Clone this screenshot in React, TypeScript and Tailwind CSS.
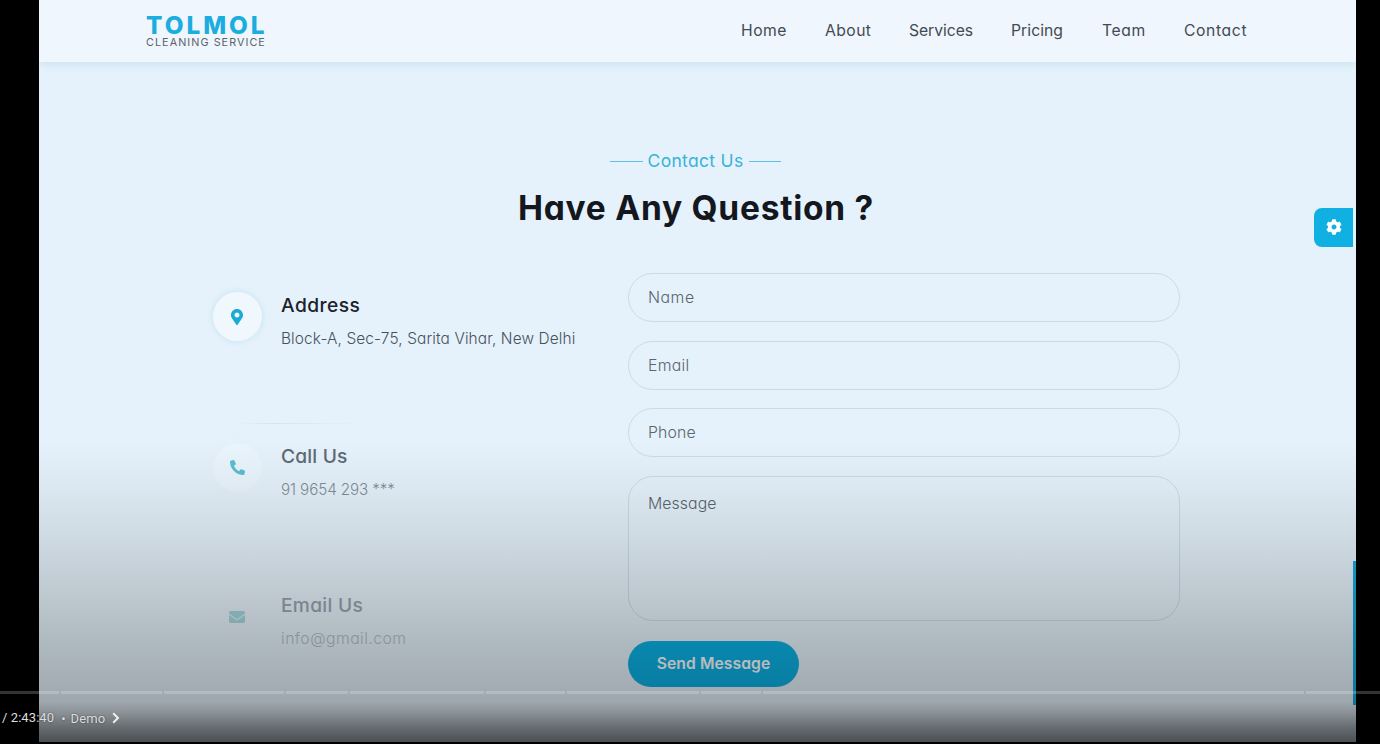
import type { ReactNode } from "react";
import { FaCog, FaEnvelope, FaMapMarkerAlt, FaPhoneAlt } from "react-icons/fa";

const navItems = [
  { label: "Home", box: "w-[84px] tracking-[0.5px]" },
  { label: "About", box: "w-[84px] tracking-[0.43px]" },
  { label: "Services", box: "w-[102px] tracking-[-0.05px]" },
  { label: "Pricing", box: "w-[91px] tracking-[0.06px]" },
  { label: "Team", box: "w-[82px] tracking-[0.6px]" },
  { label: "Contact", box: "w-[64px] tracking-[0.62px]" },
];

function Header() {
  return (
    <header className="flex h-[62px] shrink-0 items-start justify-between bg-[#eff6fd] pl-[107px] pr-[108px] shadow-[0_2px_8px_rgba(120,180,215,0.25)]">
      <div className="flex flex-col whitespace-nowrap pt-[14px]">
        <span className="h-[23px] text-[24.3px] font-extrabold leading-[23px] tracking-[3px] text-[#1badde]">TOLMOL</span>
        <span className="h-3 text-[10.8px] leading-3 tracking-[1.05px] text-[#5d626b]">CLEANING SERVICE</span>
      </div>
      <nav className="flex pt-[19px] text-[15.7px] leading-6 text-[#444a52]">
        {navItems.map((n) => (
          <a key={n.label} className={`whitespace-nowrap ${n.box}`}>{n.label}</a>
        ))}
      </nav>
    </header>
  );
}

function InfoRow({ icon, title, text, className, titleClass, textClass }: {
  icon: ReactNode; title: string; text: string; className: string; titleClass: string; textClass: string;
}) {
  return (
    <div className={`flex items-start ${className}`}>
      {icon}
      <div className="ml-[19px] whitespace-nowrap">
        <h3 className={`text-[19.2px] font-medium leading-[27px] ${titleClass}`}>{title}</h3>
        <p className={`mt-2 font-light leading-6 ${textClass}`}>{text}</p>
      </div>
    </div>
  );
}

const field =
  "block w-[552px] border border-[#c6dde7] bg-transparent px-[19px] text-[15.8px] font-light text-[#4e5963] outline-none placeholder:text-[#59656f] placeholder:opacity-100";

function ContactSection() {
  return (
    <main className="flex grow flex-col">
      <div className="flex flex-col items-center pr-[3px] pt-[87px]">
        <div className="flex items-center gap-[6px] whitespace-nowrap pr-px text-[17.5px] leading-6 tracking-[0.31px] text-[#39b2d9]">
          <span className="mt-px h-px w-[33px] bg-[#5fc0e1]" />
          <span className="-ml-px">Contact Us</span>
          <span className="mt-px h-px w-[32px] bg-[#5fc0e1]" />
        </div>
        <h2 className="mt-[15px] whitespace-nowrap text-[33.5px] font-bold leading-[40px] tracking-[0.75px] text-[#14181e]">
          Have Any Question ?
        </h2>
      </div>
      <div className="flex pl-[174px] pt-[45px]">
        <div className="w-[415px] pt-[19px]">
          <InfoRow
            className="h-[131px]"
            title="Address"
            text="Block-A, Sec-75, Sarita Vihar, New Delhi"
            titleClass="tracking-[0.45px] text-[#1b222b]"
            textClass="text-[15.4px] tracking-[0.13px] text-[#47515b]"
            icon={
              <div className="flex size-[49px] items-center justify-center rounded-full bg-[#f0f8fe] shadow-[0_0_6px_rgba(120,190,215,0.3)]">
                <FaMapMarkerAlt className="-ml-px size-4 text-[#19abd4]" />
              </div>
            }
          />
          <div className="ml-5 h-px w-[136px] bg-linear-to-r from-transparent via-[#d3e5ee] via-30% to-transparent" />
          <InfoRow
            className="h-[149px] pt-[19px]"
            title="Call Us"
            text="91 9654 293 ***"
            titleClass="tracking-[0.2px] text-[#5f6a74]"
            textClass="text-[15.2px] tracking-[-0.09px] text-[#818d97]"
            icon={
              <div className="flex size-[49px] items-center justify-center rounded-full bg-[#edf5fd]/50 shadow-[0_0_6px_rgba(235,243,251,0.5)]">
                <FaPhoneAlt className="-ml-px size-[15px] text-[#58bfd1]" />
              </div>
            }
          />
          <InfoRow
            className="pt-[19px]"
            title="Email Us"
            text="info@gmail.com"
            titleClass="tracking-[0.3px] text-[#98a3ae]"
            textClass="text-[15.8px] tracking-[0.44px] text-[#b3bec7]"
            icon={
              <div className="flex size-[49px] items-center justify-center rounded-full bg-[#edf4fc]/20">
                <FaEnvelope className="-ml-px size-4 text-[#a5d6de]" />
              </div>
            }
          />
        </div>
        <form className="flex flex-col items-start">
          <input className={`${field} h-[49px] rounded-full tracking-[0.53px]`} placeholder="Name" />
          <input className={`${field} mt-[19px] h-[49px] rounded-full tracking-[0.25px]`} placeholder="Email" />
          <input className={`${field} mt-[18px] h-[49px] rounded-full tracking-[0.13px]`} placeholder="Phone" />
          <textarea
            className={`${field} mt-[19px] h-[145px] resize-none rounded-[25px] pt-[15px] leading-6 tracking-[0.1px]`}
            placeholder="Message"
          />
          <button
            type="button"
            className="mt-5 h-[46px] w-[171px] whitespace-nowrap rounded-full bg-[#0cb0e4] text-[15.7px] font-semibold tracking-[0.07px] text-[#fafdff]"
          >
            Send Message
          </button>
        </form>
      </div>
    </main>
  );
}

const chapters = [
  "w-[59px]", "w-[101px]", "w-[120px]", "w-[62px]", "w-[134px]",
  "w-[79px]", "w-[132px]", "w-[60px]", "w-[541px]", "w-[74px]",
];

function PlayerControls() {
  return (
    <div className="absolute inset-x-0 bottom-0 flex h-[53px] flex-col font-['Roboto',sans-serif]">
      <div className="flex h-[3px] shrink-0 gap-[2px]">
        {chapters.map((w, i) => (
          <span key={i} className={`h-full shrink-0 bg-white/20 ${w}`} />
        ))}
      </div>
      <div className="flex h-12 items-center pl-[2px] text-[13px] leading-none text-[#dddddd] [text-shadow:0_0_2px_rgba(0,0,0,0.5)]">
        <span className="-mt-px whitespace-nowrap tracking-[0.08px]">/ 2:43:40</span>
        <span className="ml-[7px]">•</span>
        <span className="ml-[5px] tracking-[0.1px]">Demo</span>
        <svg viewBox="0 0 8 12" className="ml-[7px] h-3 w-2" fill="none" stroke="#eeeeee" strokeWidth="2">
          <path d="M1.2 1.2 6 6 1.2 10.8" />
        </svg>
      </div>
    </div>
  );
}

export default function App() {
  return (
    <div className="relative flex h-[744px] w-[1380px] overflow-hidden bg-black pl-[39px] pr-6 font-['Inter',sans-serif] [font-feature-settings:'cv11']">
      <div className="relative flex h-[742px] w-[1317px] flex-col overflow-hidden bg-[#e5f2fb]">
        <Header />
        <ContactSection />
        <div className="absolute right-[3px] top-[207.5px] flex h-[39px] w-[39px] items-center justify-center rounded-l-[8px] bg-[#10b0e2] pb-px">
          <FaCog className="size-4 text-white" />
        </div>
        <div className="absolute right-0 top-[561px] h-[144px] w-[3px] bg-[#14abdc]" />
      </div>
      <div className="absolute inset-x-0 top-0 h-[742px] bg-[linear-gradient(to_bottom,transparent_440px,rgba(0,0,0,0.04)_485px,rgba(0,0,0,0.09)_530px,rgba(0,0,0,0.18)_600px,rgba(0,0,0,0.24)_645px,rgba(0,0,0,0.29)_690px,rgba(0,0,0,0.31)_702px,rgba(0,0,0,0.42)_715px,rgba(0,0,0,0.56)_728px,rgba(0,0,0,0.67)_742px)]" />
      <PlayerControls />
    </div>
  );
}
